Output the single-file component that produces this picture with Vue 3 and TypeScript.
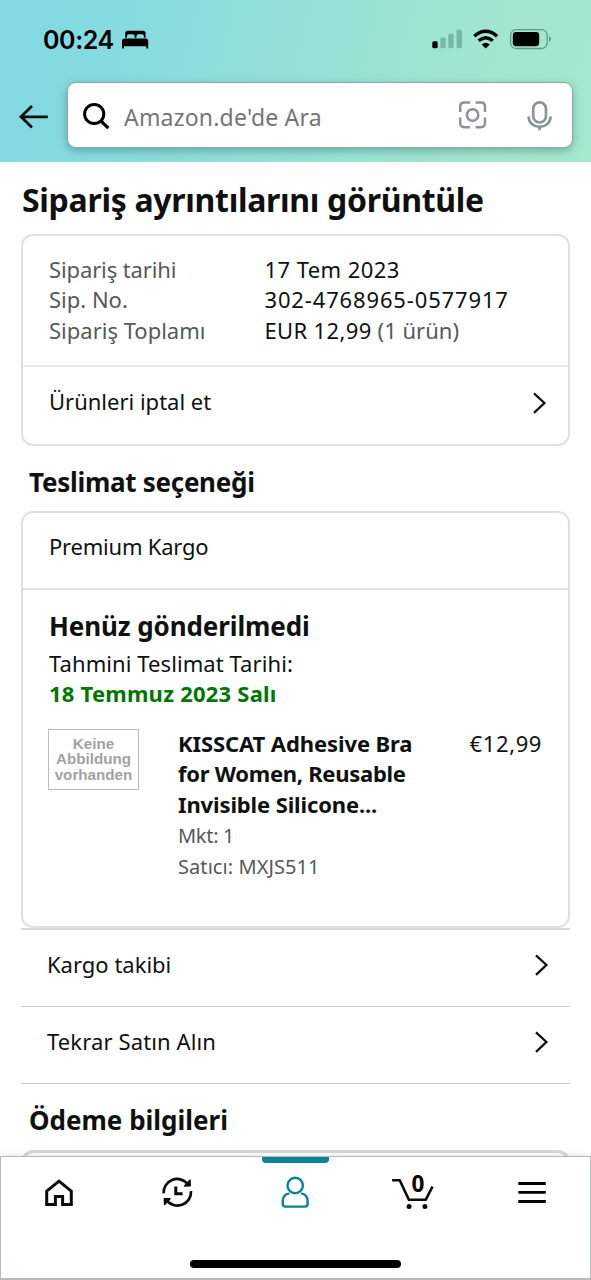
<script setup lang="ts">
interface SummaryLine {
  label: string
  value: string
  note?: string
  cls: string
}

const summary: SummaryLine[] = [
  { label: 'Sipariş tarihi', value: '17 Tem 2023', cls: 'l1' },
  { label: 'Sip. No.', value: '302-4768965-0577917', cls: 'l2' },
  { label: 'Sipariş Toplamı', value: 'EUR 12,99', note: '(1 ürün)', cls: 'l3' },
]

const links: { text: string; cls: string }[] = [
  { text: 'Kargo takibi', cls: 'k1' },
  { text: 'Tekrar Satın Alın', cls: 'k2' },
]
</script>

<template>
  <div class="screen">
    <header class="top">
      <div class="status">
        <span class="clock">00:24</span>
        <svg class="bed" width="28" height="20" viewBox="121 30 28 20">
          <path d="M125.2 37.8V33.4Q125.2 30.8 127.8 30.8H143Q145.6 30.8 145.6 33.4V37.8H143.9V36Q143.9 34.3 142.2 34.3H138.2Q136.5 34.3 136.5 36V37.8H134.6V36Q134.6 34.3 132.9 34.3H128.7Q127 34.3 127 36V37.8Z" />
          <path d="M122 48.6V41.2Q122 38.4 124.8 38.4H145.4Q148.2 38.4 148.2 41.2V48.6H146.2V46.2H124V48.6Z" />
        </svg>
        <svg class="signals" width="122" height="24" viewBox="430 27 122 24">
          <rect x="432.3" y="41.3" width="5.4" height="7" rx="1.6" />
          <g fill="#76b8a7">
            <rect x="440.4" y="37.8" width="5.2" height="10.5" rx="1.4" />
            <rect x="448.4" y="33.8" width="5.2" height="14.5" rx="1.4" />
            <rect x="456.6" y="29.8" width="5.4" height="18.5" rx="1.4" />
          </g>
          <g fill="none" stroke="#000" stroke-width="3.4">
            <path d="M474.3 36.2Q485.7 26.3 497.1 36.2" />
            <path d="M478.6 40.8Q485.7 34.7 492.8 40.8" />
          </g>
          <path d="M481.6 44.4Q485.7 41 489.8 44.4L485.7 48.4Z" />
          <rect x="510.6" y="29.7" width="36.6" height="18.8" rx="5.6" fill="none" stroke="#5a9c85" stroke-width="1.3" />
          <rect x="512.8" y="32" width="26.4" height="14.2" rx="3.4" />
          <path d="M549 36.2Q551.2 37.4 551.2 39.1T549 42Z" fill="#5a9c85" />
        </svg>
      </div>
      <div class="searchrow">
        <svg class="back" width="32" height="28" viewBox="18 103 32 28" fill="none" stroke="#0a0f0f" stroke-width="2.8">
          <path d="M47.8 116.8H21M32 106L21 116.8L32 127.6" />
        </svg>
        <div class="search">
          <svg class="lens" width="30" height="30" viewBox="81 100 30 30" fill="none" stroke="#000">
            <circle cx="94.2" cy="114" r="9.6" stroke-width="3" />
            <path d="M101 121L108.3 128.2" stroke-width="3.2" />
          </svg>
          <span class="placeholder">Amazon.de'de Ara</span>
          <svg class="scan" width="30" height="30" viewBox="458 100 30 30" fill="none" stroke="#8b9495" stroke-width="2.5">
            <path d="M460.2 112V106.6Q460.2 102.4 464.4 102.4H470M475.6 102.4H480.8Q485 102.4 485 106.6V112M485 117.6V123Q485 127.2 480.8 127.2H475.6M470 127.2H464.4Q460.2 127.2 460.2 123V117.6" />
            <circle cx="472.6" cy="115" r="5.7" />
          </svg>
          <svg class="mic" width="28" height="34" viewBox="526 98 28 34" fill="none" stroke="#8b9495" stroke-width="2.7">
            <rect x="533.2" y="102.3" width="12.8" height="20.2" rx="6.4" />
            <path d="M528.6 116.4C529 130.4 550.2 130.4 550.6 116.4M539.6 126.6V130.2" />
          </svg>
        </div>
      </div>
    </header>

    <main class="body">
      <h1 class="title"><span class="t-title">Sipariş ayrıntılarını görüntüle</span></h1>

      <section class="card">
        <dl class="summary">
          <div v-for="line in summary" :key="line.label" class="line" :class="line.cls">
            <dt>{{ line.label }}</dt>
            <dd>
              <span class="val">{{ line.value }}</span>
              <span v-if="line.note" class="note">{{ line.note }}</span>
            </dd>
          </div>
        </dl>
        <div class="cancel">
          <span class="t-cancel">Ürünleri iptal et</span>
          <svg class="chev" width="16" height="24" viewBox="0 0 16 24"><path d="M2 2.4L12.4 12L2 21.8" /></svg>
        </div>
      </section>

      <h2 class="heading"><span class="t-h1">Teslimat seçeneği</span></h2>

      <section class="card delivery">
        <div class="shipping"><span class="t-prem">Premium Kargo</span></div>
        <div class="package">
          <h3><span class="t-h3">Henüz gönderilmedi</span></h3>
          <p class="eta"><span class="t-eta">Tahmini Teslimat Tarihi:</span></p>
          <p class="date"><span class="t-date">18 Temmuz 2023 Salı</span></p>
          <div class="item">
            <div class="noimg"><span>Keine</span><span>Abbildung</span><span>vorhanden</span></div>
            <div class="info">
              <p class="name">
                <span class="n1">KISSCAT Adhesive Bra</span>
                <span class="n2">for Women, Reusable</span>
                <span class="n3">Invisible Silicone...</span>
              </p>
              <p class="meta m1">Mkt: 1</p>
              <p class="meta m2">Satıcı: MXJS511</p>
            </div>
            <span class="price">€12,99</span>
          </div>
        </div>
      </section>

      <nav class="links">
        <div v-for="link in links" :key="link.text" class="link">
          <span :class="link.cls">{{ link.text }}</span>
          <svg class="chev" width="16" height="24" viewBox="0 0 16 24"><path d="M2 2.4L12.4 12L2 21.8" /></svg>
        </div>
      </nav>

      <h2 class="heading pay"><span class="t-pay">Ödeme bilgileri</span></h2>
      <section class="card payment"></section>
    </main>

    <footer class="tabs">
      <div class="tabrow">
        <div class="tab">
          <svg width="36" height="36" viewBox="42 1175 36 36" fill="none" stroke="#0a0a0a" stroke-width="3">
            <path d="M46.7 1204.6V1191.2L59 1181.2L71.3 1191.2V1204.6H62.6V1196.6H55.4V1204.6Z" />
          </svg>
        </div>
        <div class="tab">
          <svg width="36" height="36" viewBox="160 1175 36 36" fill="none" stroke="#0a0a0a" stroke-width="2.7">
            <path d="M163.6 1193.4A13.6 13.6 0 0 1 187.4 1183.6M191 1191.2A13.6 13.6 0 0 1 167.2 1201" />
            <path d="M190 1180.2L190.2 1185.8L184.6 1186ZM164.6 1204.4L164.4 1198.9L170 1198.7Z" fill="#0a0a0a" stroke-width="1.6" stroke-linejoin="round" />
            <path d="M175.8 1186.6V1193.8H182.6" stroke-width="3" />
          </svg>
        </div>
        <div class="tab active">
          <svg width="36" height="36" viewBox="277.2 1175 36 36" fill="none" stroke="#0c8296" stroke-width="2.4">
            <circle cx="295.4" cy="1185.5" r="7.7" />
            <path d="M289.6 1193.4C285 1194 283 1197.4 283 1201.4V1204Q283 1206.6 285.6 1206.6H305.2Q307.8 1206.6 307.8 1204V1201.4C307.8 1197.4 305.8 1194 301.2 1193.4" />
          </svg>
        </div>
        <div class="tab">
          <svg width="46" height="40" viewBox="390.5 1173 46 40" fill="none" stroke="#0a0a0a" stroke-width="2.6">
            <path d="M392.6 1180.2H400.2L409.4 1199.8H426.2L433 1186.6" />
            <circle cx="409.6" cy="1206.6" r="2.5" fill="#0a0a0a" stroke="none" />
            <circle cx="425.4" cy="1206.6" r="2.5" fill="#0a0a0a" stroke="none" />
          </svg>
          <span class="count">0</span>
        </div>
        <div class="tab">
          <svg width="36" height="36" viewBox="513 1175 36 36" fill="none" stroke="#000" stroke-width="2.9">
            <path d="M518.3 1183.5H545.8M518.3 1192.4H545.8M518.3 1201.5H545.8" />
          </svg>
        </div>
      </div>
      <div class="homebar"></div>
    </footer>
  </div>
</template>

<style>
html,
body {
  margin: 0;
  background: #fff;
}
</style>

<style scoped>
.screen {
  position: relative;
  display: flex;
  flex-direction: column;
  width: 591px;
  height: 1280px;
  overflow: hidden;
  background: #fff;
  color: #0f1111;
  font-family: 'Noto Sans', 'Open Sans', sans-serif;
  font-size: 22px;
  line-height: 30.4px;
  white-space: nowrap;
}
h1, h2, h3, p, dl, dd { margin: 0; }
svg { display: block; flex: none; }

.top {
  flex: none;
  height: 162px;
  background: linear-gradient(105deg, #82d8e4 0%, #84dae0 15%, #a4e7ce 85%, #a6e8cc 100%);
}
.status {
  display: flex;
  box-sizing: border-box;
  height: 83px;
  padding: 27px 39px 0 43px;
}
.clock {
  width: 78px;
  font-family: Inter, sans-serif;
  font-weight: 600;
  font-size: 25px;
  line-height: 26px;
  letter-spacing: -0.4px;
  color: #000;
}
.bed { margin-top: 3px; }
.signals { margin-left: auto; }
.searchrow {
  display: flex;
  align-items: center;
  padding-left: 18px;
}
.back { margin-top: 3px; }
.search {
  display: flex;
  align-items: center;
  box-sizing: border-box;
  width: 506px;
  height: 66px;
  margin: -1px 0 0 17px;
  padding: 0 18px 0 13px;
  border: 1px solid #8fa9a9;
  border-radius: 9px;
  background: #fff;
  box-shadow: 0 3px 8px rgba(20, 70, 70, 0.35);
}
.placeholder {
  margin: 5px auto 0 13px;
  font-size: 23px;
  letter-spacing: 0.2px;
  color: #757575;
}
.mic { margin: 0 0 0 38px; }

.body { flex: 1; min-height: 0; overflow: hidden; padding: 16px 21px 0; }
.title { height: 44px; font-size: 32px; line-height: 44px; font-weight: 700; padding-left: 1px; }
.card {
  box-sizing: border-box;
  margin-top: 12px;
  height: 212px;
  border: 2px solid #dfe1e1;
  border-radius: 12px;
}
.summary { box-sizing: border-box; height: 131px; padding: 18px 26px 0; border-bottom: 2px solid #e8e9e9; }
.line { display: flex; }
.line dt { width: 215.5px; color: #565959; }
.line dd { display: flex; gap: 6px; }
.note { color: #565959; }
.cancel, .link { display: flex; justify-content: space-between; align-items: center; }
.cancel { height: 72px; padding: 0 20px 0 26px; }
.cancel span { margin-top: -4px; }
.chev { fill: none; stroke: #0f1111; stroke-width: 2.3; }
.heading { height: 36px; margin-top: 17.5px; padding-left: 8px; font-size: 26px; line-height: 36px; font-weight: 700; }
.delivery { height: 417px; margin-top: 11.5px; }
.shipping { box-sizing: border-box; height: 77px; padding: 18px 26px 0; border-bottom: 2px solid #dfe1e1; }
.package { padding: 18px 25px 0 26px; }
h3 { height: 36px; font-size: 26px; line-height: 36px; }
.eta { margin-top: 4px; }
.date { font-weight: 700; color: #007600; }
.item { display: flex; align-items: flex-start; margin-top: 19.2px; }
.noimg {
  display: flex;
  flex-direction: column;
  align-items: center;
  box-sizing: border-box;
  width: 91px;
  height: 61px;
  margin: 1px 0 0 -1px;
  padding-top: 6px;
  border: 1.5px solid #bcbcbc;
  font: 700 15.2px/15.3px 'Liberation Sans', Arial, sans-serif;
  color: #a2a2a2;
}
.info { margin-left: 39px; }
.name { display: flex; flex-direction: column; align-items: flex-start; font-weight: 700; }
.meta { font-size: 20px; color: #565959; }
.m1 { margin-top: 2px; }
.price { margin-left: auto; margin-right: 1px; }
.links { border-top: 2px solid #d9dada; }
.link { box-sizing: border-box; height: 77px; padding: 0 20px 6px 26px; border-bottom: 1px solid #c9cccc; }
.link span { margin-top: -1px; }
.pay { margin-top: 17.5px; }
.payment { height: 60px; margin-top: 12px; border: 3px solid #d5d8d8; border-radius: 12px; }

/* tracking per run of text */
.t-title { letter-spacing: -0.3px; }
.l1 dt { letter-spacing: -0.12px; }
.l1 .val { letter-spacing: 0.42px; }
.l2 .val { letter-spacing: 0.85px; }
.l3 .val { letter-spacing: 0.35px; }
.t-h1 { letter-spacing: -0.28px; }
.t-prem { letter-spacing: -0.22px; }
.t-h3 { letter-spacing: -0.1px; }
.t-eta { letter-spacing: 0.08px; }
.t-date { letter-spacing: 0.22px; }
.n1 { letter-spacing: -0.1px; }
.n2 { letter-spacing: -0.28px; }
.n3 { letter-spacing: -0.13px; }
.m1 { letter-spacing: -0.3px; }
.m2 { letter-spacing: 0.07px; }
.price { letter-spacing: 0.6px; }
.k2 { letter-spacing: 0.12px; }

.tabs {
  flex: none;
  display: flex;
  flex-direction: column;
  align-items: center;
  box-sizing: border-box;
  height: 124px;
  border: 1px solid #b4bbbb;
  border-bottom-width: 2px;
  background: #fff;
  box-shadow: 0 -1px 5px rgba(0, 0, 0, 0.1);
  z-index: 1;
}
.tabrow { display: flex; width: 100%; height: 72px; }
.tab { position: relative; flex: 1; display: flex; align-items: center; justify-content: center; }
.active::before {
  content: '';
  position: absolute;
  top: 0;
  width: 67px;
  height: 6px;
  border-radius: 0 0 4px 4px;
  background: #0c8296;
}
.count {
  position: absolute;
  left: 57px;
  top: 14px;
  font-family: 'Open Sans', 'Noto Sans', sans-serif;
  font-weight: 700;
  font-size: 22.5px;
  line-height: 26px;
  color: #000;
}
.homebar { width: 211px; height: 8px; margin-top: 31px; border-radius: 4px; background: #000; }
</style>
